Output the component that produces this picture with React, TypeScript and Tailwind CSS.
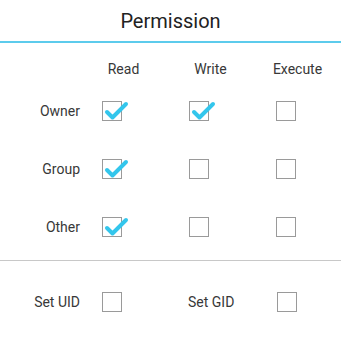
import React from 'react';

const CheckBox: React.FC<{ checked?: boolean }> = ({ checked }) => (
  <div className="relative w-[20px] h-[20px] border-[1.5px] border-[#9a9a9a] shrink-0">
    {checked && (
      <svg
        className="absolute left-[1px] top-[-2px]"
        width="26"
        height="22"
        viewBox="0 0 26 22"
        fill="none"
      >
        <path
          d="M3 12 L8.5 17.5 L22 4"
          stroke="#33c6ec"
          strokeWidth="4"
          strokeLinecap="round"
          strokeLinejoin="round"
        />
      </svg>
    )}
  </div>
);

const rows = [
  { label: 'Owner', values: [true, true, false] },
  { label: 'Group', values: [true, false, false] },
  { label: 'Other', values: [true, false, false] },
];

const App: React.FC = () => {
  return (
    <div
      className="w-[341px] h-[345px] bg-white text-[#383838] overflow-hidden"
      style={{ fontFamily: 'Roboto, "Noto Sans", sans-serif' }}
    >
      <div className="h-[41px] flex items-center justify-center text-[20px] text-[#222222] pt-[1px]">
        Permission
      </div>
      <div className="h-[2px] bg-[#5ccbec]" />

      <div className="flex items-center h-[39px] text-[14px] pt-[13px]">
        <div className="w-[102px] shrink-0" />
        {['Read', 'Write', 'Execute'].map((h) => (
          <div key={h} className="w-[43px] mr-[44px] shrink-0 flex justify-center whitespace-nowrap">
            {h}
          </div>
        ))}
      </div>

      {rows.map((row) => (
        <div key={row.label} className="flex items-center h-[58px] text-[14px]">
          <div className="w-[80px] shrink-0 text-right">{row.label}</div>
          <div className="w-[22px] shrink-0" />
          {row.values.map((v, i) => (
            <div key={i} className="w-[87px] shrink-0">
              <CheckBox checked={v} />
            </div>
          ))}
        </div>
      ))}

      <div className="h-[1px] bg-[#c8c8c8] mt-[4px]" />

      <div className="flex items-center h-[80px] pt-[2px] text-[14px]">
        <div className="w-[80px] shrink-0 text-right">Set UID</div>
        <div className="w-[22px] shrink-0" />
        <div className="w-[86px] shrink-0">
          <CheckBox />
        </div>
        <div className="w-[89px] shrink-0 whitespace-nowrap">Set GID</div>
        <CheckBox />
      </div>
    </div>
  );
};

export default App;
